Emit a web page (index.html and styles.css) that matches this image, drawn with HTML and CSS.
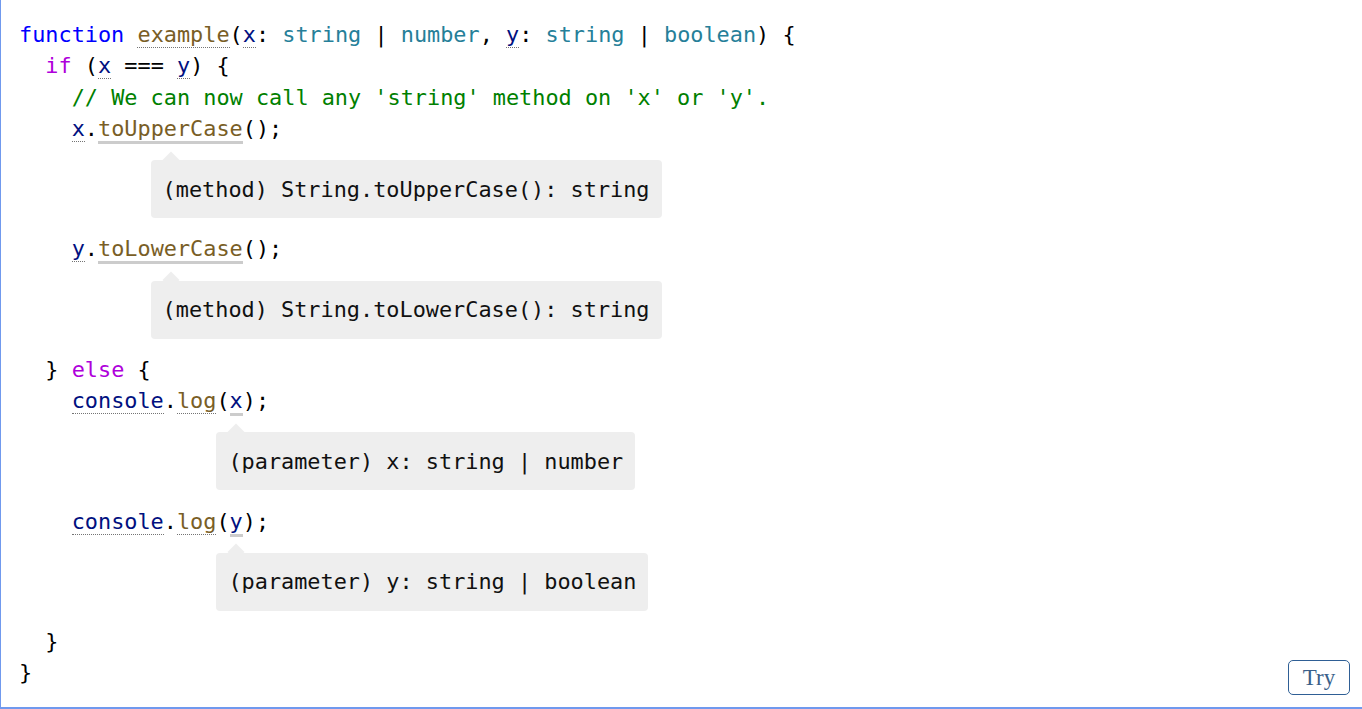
FILE: index.html
```html
<!DOCTYPE html>
<html lang="en">
<head>
<meta charset="utf-8">
<title>example</title>
<link rel="stylesheet" href="styles.css">
</head>
<body>
<div class="frame">
  <div class="code">
    <div class="line"><span class="k">function</span> <span class="fn u">example</span>(<span class="v u">x</span>: <span class="t">string</span> | <span class="t">number</span>, <span class="v u">y</span>: <span class="t">string</span> | <span class="t">boolean</span>) {</div>
    <div class="line">  <span class="kw">if</span> (<span class="v u">x</span> === <span class="v u">y</span>) {</div>
    <div class="line">    <span class="c">// We can now call any 'string' method on 'x' or 'y'.</span></div>
    <div class="line">    <span class="v u">x</span>.<span class="fn q">toUpperCase</span>();</div>
    <div class="query m10">(method) String.toUpperCase(): string</div>
    <div class="line">    <span class="v u">y</span>.<span class="fn q">toLowerCase</span>();</div>
    <div class="query m10">(method) String.toLowerCase(): string</div>
    <div class="line">  } <span class="kw">else</span> {</div>
    <div class="line">    <span class="v u">console</span>.<span class="fn u">log</span>(<span class="v q">x</span>);</div>
    <div class="query m15">(parameter) x: string | number</div>
    <div class="line">    <span class="v u">console</span>.<span class="fn u">log</span>(<span class="v q">y</span>);</div>
    <div class="query m15">(parameter) y: string | boolean</div>
    <div class="line">  }</div>
    <div class="line">}</div>
  </div>
  <button class="try" type="button">Try</button>
</div>
</body>
</html>
```

FILE: styles.css
```css
html, body {
  margin: 0;
  padding: 0;
  background: #fff;
}

.frame {
  position: relative;
  box-sizing: border-box;
  height: 709px;
  border-left: 1px solid #7099ee;
  border-bottom: 2px solid #7099ee;
  padding: 19px 0 0 18px;
}

.code {
  font-family: "DejaVu Sans Mono", monospace;
  font-size: 21.86px;
  line-height: 31.33px;
  color: #000;
}

.line {
  white-space: pre;
}

.k { color: #0000ff; }
.kw { color: #af00db; }
.fn { color: #795e26; }
.v { color: #001080; }
.t { color: #267f99; }
.c { color: #008000; }

.u {
  border-bottom: 1px dotted #747474;
}

.q {
  border-bottom: 3px solid #cccccc;
}

.query {
  position: relative;
  width: fit-content;
  white-space: pre;
  background: #eeeeee;
  border-radius: 4px;
  padding: 13.25px 12px;
  margin-top: 16px;
  margin-bottom: 15.25px;
  color: #111;
}

.query::before {
  content: "";
  position: absolute;
  top: -6.5px;
  left: 14px;
  width: 12px;
  height: 12px;
  background: #eeeeee;
  transform: rotate(45deg);
}

.m10 { margin-left: 10ch; }
.m15 { margin-left: 15ch; }

.try {
  position: absolute;
  right: 12px;
  bottom: 12px;
  width: 62px;
  height: 35px;
  box-sizing: border-box;
  background: #fff;
  border: 1px solid #2f5f95;
  border-radius: 5px;
  font-family: "Liberation Serif", serif;
  font-size: 23px;
  color: #3b5f8a;
  padding: 0;
  line-height: 33px;
}
```
